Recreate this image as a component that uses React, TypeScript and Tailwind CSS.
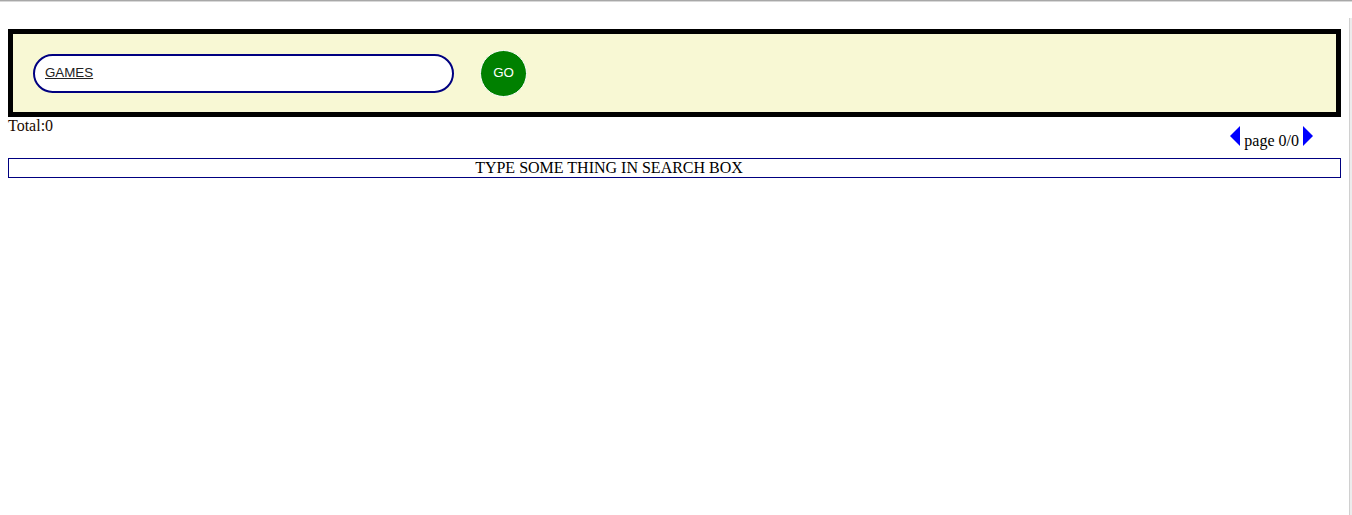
const SearchBar = () => {
  return (
    <div className="mt-[27px] flex h-[88px] items-center border-[5px] border-black bg-[#f8f8d4] pl-[20px]">
      <div className="flex h-[39px] w-[421px] items-center rounded-full border-2 border-[#000080] bg-white pl-[10px] font-['Liberation_Sans',Arial,sans-serif] text-[13.33px] text-[#222] underline">
        GAMES
      </div>
      <button className="ml-[26px] flex h-[47px] w-[47px] items-center justify-center rounded-full border border-white bg-[#008000] font-['Liberation_Sans',Arial,sans-serif] text-[13.33px] text-white">
        GO
      </button>
    </div>
  );
};

const Pager = () => {
  return (
    <div className="mr-[28px] mt-[9px] whitespace-nowrap">
      <span className="inline-block h-0 w-0 border-y-[10px] border-r-[10px] border-y-transparent border-r-[#0000ff]" />
      <span className="mx-[4px]">page 0/0</span>
      <span className="inline-block h-0 w-0 border-y-[10px] border-l-[10px] border-y-transparent border-l-[#0000ff]" />
    </div>
  );
};

export default function App() {
  return (
    <div className="flex min-h-[515px] flex-col bg-white font-['Liberation_Serif','Times_New_Roman',serif] text-[16px] text-black">
      <div className="h-px bg-[#a8a8a8]" />
      <div className="h-px bg-[#d8d8d8]" />
      <div className="flex flex-1">
        <main className="flex-1 px-[8px]">
          <SearchBar />

          <div className="flex items-start justify-between">
            <div className="leading-[18px] text-[#1a0a00]">Total:0</div>
            <Pager />
          </div>

          <div className="mt-[5px] h-[20px] border border-[#000080] pr-[131px] text-center leading-[18px]">
            TYPE SOME THING IN SEARCH BOX
          </div>
        </main>
        <div className="mt-[16px] w-[3px] border-l border-[#d0d0d0] bg-[#ececec]" />
      </div>
    </div>
  );
}
